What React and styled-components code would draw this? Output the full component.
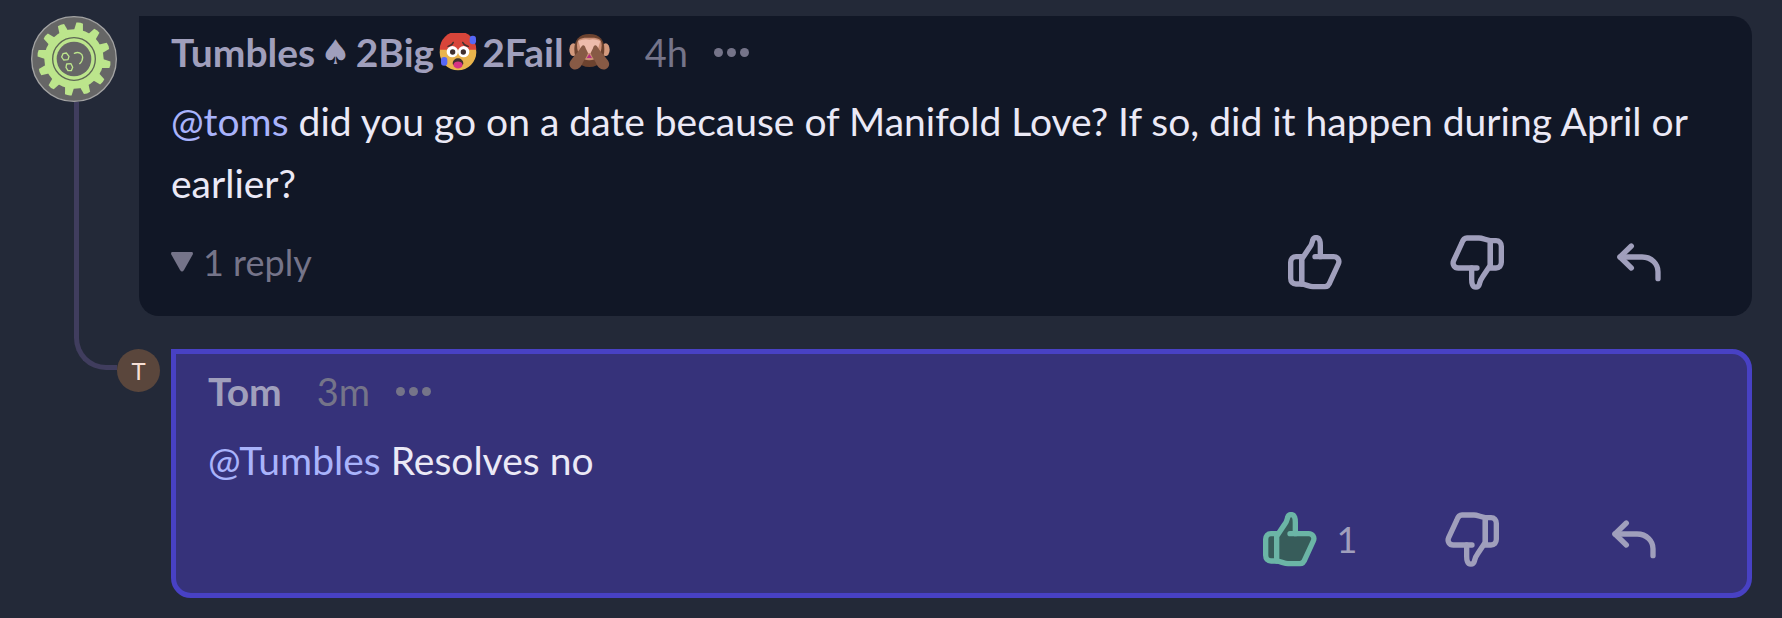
import React from "react";
import styled, { createGlobalStyle } from "styled-components";

const colors = {
  canvas: "#232938",
  card: "#111726",
  highlight: "#36327a",
  highlightBorder: "#4841c4",
  line: "#403d5e",
  name: "#a09fbc",
  muted: "#757489",
  text: "#ebe9f6",
  mention: "#a9b3fb",
  liked: "#6bb5a6",
  likedFill: "#375c5a",
};

const GearAvatar = () => (
  <svg width="86" height="86" viewBox="93 48 258 258" role="img" aria-label="Tumbles">
    <circle cx="222" cy="177" r="127" fill="#666666" stroke="#a3a3a3" strokeWidth="4" />
    <g fill="#bce58c">
      <circle cx="222" cy="177" r="89" />
      {Array.from({ length: 12 }, (_, i) => (
        <path
          key={i}
          d="M208 94 L212 68 Q222 65 232 68 L236 94 Z"
          transform={`rotate(${9 + i * 30} 222 177)`}
        />
      ))}
    </g>
    <circle cx="222" cy="177" r="64" fill="none" stroke="#5d6654" strokeWidth="4" />
    <circle cx="222" cy="177" r="52" fill="#666666" />
    <g fill="none" stroke="#bce58c" strokeWidth="4" strokeLinecap="round" strokeLinejoin="round">
      <path d="M189 161 L199 159 L207 169 L204 179 L191 180 L185 171 Z" />
      <path d="M200 192 L213 191 L218 202 L214 212 L204 212 L198 202 Z" />
      <path d="M223 160 C236 154 247 160 248 171 C248 180 244 187 239 191" />
    </g>
  </svg>
);

const HotFace = () => (
  <svg width="38" height="38" viewBox="0 0 114 114" role="img" aria-label="overheated face">
    <circle cx="57" cy="57" r="55" fill="#e9b44c" />
    <path d="M2 50 A55 55 0 0 1 112 50 Z" fill="#d8453a" />
    <circle cx="40" cy="56" r="17" fill="#ffffff" />
    <circle cx="74" cy="56" r="17" fill="#ffffff" />
    <circle cx="41" cy="57" r="8" fill="#40302e" />
    <circle cx="73" cy="57" r="8" fill="#40302e" />
    <path
      d="M27 40 Q39 38 43 28 M71 28 Q76 38 88 40"
      fill="none"
      stroke="#40302e"
      strokeWidth="4"
      strokeLinecap="round"
    />
    <path d="M41 92 C41 70 73 70 73 92 Q73 97 57 97 Q41 97 41 92 Z" fill="#40302e" />
    <path d="M43 96 C44 82 70 82 71 96 C69 110 45 110 43 96 Z" fill="#d63384" />
    <rect x="92" y="8" width="19" height="26" rx="9" fill="#5667f5" />
    <rect x="6" y="72" width="19" height="26" rx="9" fill="#5667f5" />
  </svg>
);

const Monkey = () => (
  <svg width="41" height="38" viewBox="0 0 123 114" role="img" aria-label="see-no-evil monkey">
    <ellipse cx="13" cy="50" rx="12" ry="19" fill="#d39a7e" />
    <ellipse cx="110" cy="50" rx="12" ry="19" fill="#d39a7e" />
    <path d="M61 3 C30 3 16 22 16 48 C16 78 28 102 61 102 C94 102 106 78 106 48 C106 22 92 3 61 3 Z" fill="#6d432f" />
    <path d="M24 36 C24 14 40 14 61 14 C82 14 98 14 98 36 C98 64 84 82 61 82 C38 82 24 64 24 36 Z" fill="#cd9178" />
    <path d="M28 24 Q46 16 61 20 Q76 16 94 24 L88 44 L72 60 L50 60 L34 44 Z" fill="#edbcac" />
    <path d="M53 75 L61 63 L69 75 Z" fill="#b52f83" />
    <g fill="#875a45">
      <path d="M38 40 C43 34 48 38 50 46 L57 60 C54 72 48 76 42 88 C36 104 24 114 11 108 C-2 101 0 88 7 80 C18 66 32 52 38 40 Z" />
      <path d="M84 40 C79 34 74 38 72 46 L65 60 C68 72 74 76 80 88 C86 104 98 114 111 108 C124 101 122 88 115 80 C104 66 90 52 84 40 Z" />
    </g>
  </svg>
);

const Thumb = ({ down, liked }) => (
  <svg
    width="54"
    height="55"
    viewBox="85 45 162 165"
    fill={liked ? colors.likedFill : "none"}
    stroke={liked ? colors.liked : colors.name}
    strokeWidth="16"
    strokeLinecap="round"
    strokeLinejoin="round"
    aria-hidden="true"
  >
    <g transform={down ? "rotate(180 166 127)" : undefined}>
      <path d="M126 110 H109 C99 110 93 117 93 127 V175 C93 185 99 192 109 192 H126 Z" />
      <path d="M126 118 L150 82 C157 73 157 67 159 61 C162 50 176 50 180 61 C182 66 182 70 182 76 V110 H222 C234 110 241 121 236 132 L212 184 C208 196 203 200 196 200 H160 C150 200 137 193 126 192 Z" />
      <path d="M182 110 H166" />
    </g>
  </svg>
);

const ReplyArrow = () => (
  <svg
    width="44"
    height="39"
    viewBox="1071 68 132 117"
    fill="none"
    stroke={colors.name}
    strokeWidth="16"
    strokeLinecap="round"
    strokeLinejoin="round"
    aria-hidden="true"
  >
    <path d="M1114 77 L1080 110 L1114 143" />
    <path d="M1080 110 H1146 C1176 110 1194 132 1194 154 V175" />
  </svg>
);

const Dots = () => (
  <svg width="35" height="9" viewBox="0 0 35 9" fill={colors.muted} aria-hidden="true">
    <circle cx="4.5" cy="4.5" r="4.5" />
    <circle cx="17.5" cy="4.5" r="4.5" />
    <circle cx="30.5" cy="4.5" r="4.5" />
  </svg>
);

const Comment = ({ highlighted, name, time, mention, text, replies, likes }) => (
  <Card $highlighted={highlighted}>
    <Header>
      <Name href="#">{name}</Name>
      <Time>{time}</Time>
      <IconButton aria-label="More options">
        <Dots />
      </IconButton>
    </Header>
    <Body>
      <Mention href="#">{mention}</Mention> {text}
    </Body>
    <Footer>
      {replies && (
        <Replies>
          <svg width="22" height="20" viewBox="0 0 22 20" fill={colors.muted} aria-hidden="true">
            <path d="M1 0 H21 Q22 0 22 2 L13 18 Q11 21 9 18 L0 2 Q0 0 1 0 Z" />
          </svg>
          {replies}
        </Replies>
      )}
      <Actions>
        <Action aria-label="Like">
          <Thumb liked={likes > 0} />
          {likes > 0 && <span>{likes}</span>}
        </Action>
        <Action aria-label="Dislike">
          <Thumb down />
        </Action>
        <Action aria-label="Reply">
          <ReplyArrow />
        </Action>
      </Actions>
    </Footer>
  </Card>
);

const App = () => (
  <>
    <GlobalStyle />
    <Thread>
      <Avatar>
        <GearAvatar />
      </Avatar>
      <ThreadLine />
      <Comment
        name={
          <>
            <span>Tumbles</span>
            <Spade>♠</Spade>
            <span>2Big</span>
            <HotFace />
            <span>2Fail</span>
            <Monkey />
          </>
        }
        time="4h"
        mention="@toms"
        text="did you go on a date because of Manifold Love? If so, did it happen during April or earlier?"
        replies="1 reply"
      />
      <SmallAvatar>T</SmallAvatar>
      <Comment
        highlighted
        name="Tom"
        time="3m"
        mention="@Tumbles"
        text="Resolves no"
        likes={1}
      />
    </Thread>
  </>
);

const GlobalStyle = createGlobalStyle`
  * {
    box-sizing: border-box;
  }

  body {
    background-color: ${colors.canvas};
    font-family: Lato, "Liberation Sans", sans-serif;
    font-size: 39px;
    margin: 0;
  }

  svg {
    display: block;
    flex-shrink: 0;
  }

  button {
    background: none;
    border: 0;
    cursor: pointer;
    font: inherit;
    padding: 0;
  }

  a {
    text-decoration: none;
  }
`;

const Thread = styled.main`
  display: grid;
  grid-template-columns: 43px 43px 22px 32px 1fr;
  grid-template-rows: auto 33px 21px auto;
  padding: 16px 30px 20px 31px;
`;

const Avatar = styled.div`
  grid-column: 1 / 3;
  grid-row: 1;
`;

const ThreadLine = styled.div`
  border: solid ${colors.line};
  border-width: 0 0 5px 5px;
  border-bottom-left-radius: 32px;
  grid-column: 2;
  grid-row: 1 / 4;
  margin-top: 86px;
`;

const SmallAvatar = styled.div`
  align-items: center;
  background-color: #5a463c;
  border-radius: 50%;
  color: #f6dfd5;
  display: flex;
  font-size: 24px;
  grid-column: 3 / 5;
  grid-row: 3 / 5;
  height: 43px;
  justify-content: center;
  width: 43px;
`;

const Card = styled.article`
  background-color: ${({ $highlighted }) => ($highlighted ? colors.highlight : colors.card)};
  border: ${({ $highlighted }) => ($highlighted ? `5px solid ${colors.highlightBorder}` : "0")};
  border-radius: 0 20px 20px 20px;
  grid-column: ${({ $highlighted }) => ($highlighted ? "5" : "4 / 6")};
  grid-row: ${({ $highlighted }) => ($highlighted ? "3 / 5" : "1")};
  min-width: 0;
  padding: ${({ $highlighted }) => ($highlighted ? "9px 32px 26px" : "8px 32px 26px")};
`;

const Header = styled.header`
  align-items: center;
  display: flex;
  line-height: 56px;
`;

const Name = styled.a`
  align-items: center;
  color: ${colors.name};
  display: flex;
  font-weight: bold;
  gap: 5px;
`;

const Spade = styled.span`
  font-family: "DejaVu Sans", sans-serif;
  font-size: 34px;
  font-weight: normal;
`;

const Time = styled.span`
  color: ${colors.muted};
  font-size: 38px;
  margin-left: 35px;
`;

const IconButton = styled.button`
  margin-left: 26px;
`;

const Body = styled.p`
  color: ${colors.text};
  line-height: 62px;
  margin: 10px 0 20px;
`;

const Mention = styled.a`
  color: ${colors.mention};
`;

const Footer = styled.footer`
  align-items: center;
  display: flex;
  height: 56px;
`;

const Replies = styled.button`
  align-items: center;
  color: ${colors.muted};
  display: flex;
  font-size: 36px;
  gap: 10px;
`;

const Actions = styled.div`
  display: flex;
  margin-left: auto;
`;

const Action = styled.button`
  align-items: center;
  color: ${colors.name};
  display: flex;
  font-size: 36px;
  gap: 20px;
  height: 56px;
  justify-content: center;
  width: 162px;
`;

export default App;
